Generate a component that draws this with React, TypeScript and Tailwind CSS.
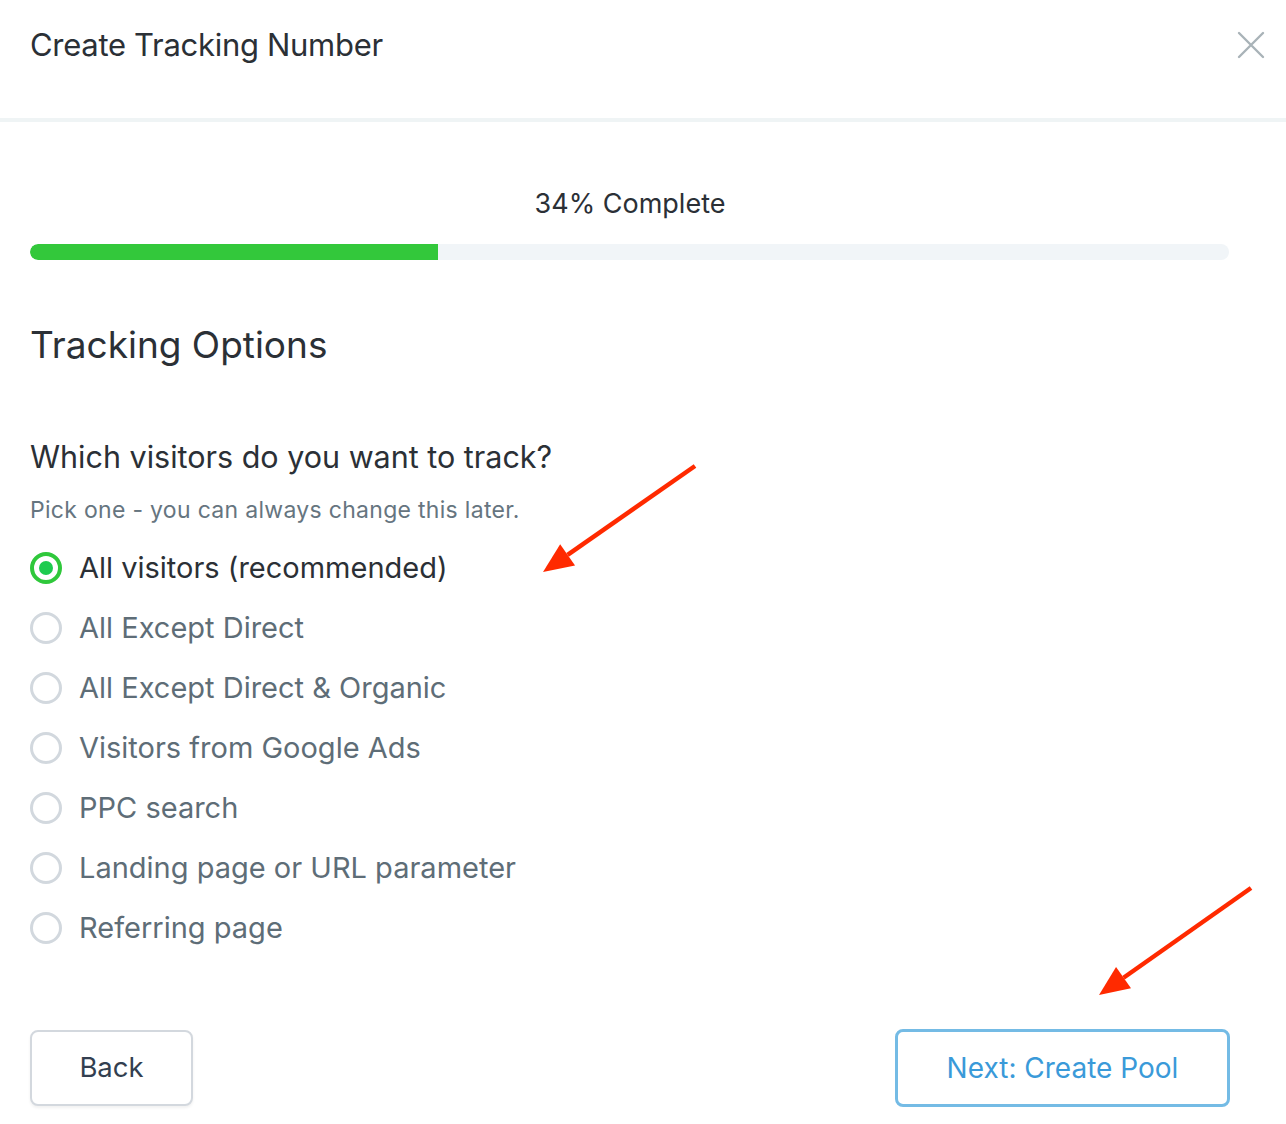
import React from "react";

const options = [
  "All visitors (recommended)",
  "All Except Direct",
  "All Except Direct & Organic",
  "Visitors from Google Ads",
  "PPC search",
  "Landing page or URL parameter",
  "Referring page",
];

function Arrow({ x1, y1, x2, y2 }: { x1: number; y1: number; x2: number; y2: number }) {
  const ang = Math.atan2(y2 - y1, x2 - x1);
  const len = 30;
  const w = 13;
  const bx = x2 - len * Math.cos(ang);
  const by = y2 - len * Math.sin(ang);
  const px = -Math.sin(ang) * w;
  const py = Math.cos(ang) * w;
  return (
    <g>
      <line x1={x1} y1={y1} x2={bx} y2={by} stroke="#ff2a00" strokeWidth={4.5} />
      <polygon points={`${x2},${y2} ${bx + px},${by + py} ${bx - px},${by - py}`} fill="#ff2a00" />
    </g>
  );
}

export default function App() {
  return (
    <div
      className="relative w-[1286px] h-[1124px] bg-white overflow-hidden text-[#2b3036]"
      style={{ fontFamily: "Inter, 'Noto Sans', sans-serif" }}
    >
      <div className="h-[118px] flex items-start justify-between pl-[30px] pr-[20px] pt-[25px]">
        <div className="text-[31px] leading-[40px] tracking-[-0.3px] text-[#2b3036]">Create Tracking Number</div>
        <svg width="30" height="30" viewBox="0 0 30 30" className="mt-[5px]">
          <path d="M3 3 L27 27 M27 3 L3 27" stroke="#a9b3b8" strokeWidth="2.4" strokeLinecap="round" />
        </svg>
      </div>
      <div className="h-[4px] bg-[#eff4f5]" />

      <div className="pl-[30px] pr-[56px]">
        <div className="pt-[64px] text-center text-[27px] leading-[36px] text-[#2b3036]">34% Complete</div>
        <div className="mt-[22px] h-[16px] w-[1199px] rounded-full bg-[#f1f5f8] overflow-hidden">
          <div className="h-full w-[408px] bg-[#33c83b] rounded-l-full" />
        </div>

        <div className="mt-[61px] text-[37px] leading-[48px] text-[#2b3036]">Tracking Options</div>

        <div className="mt-[68px] text-[30.5px] leading-[40px] text-[#2b3036]">Which visitors do you want to track?</div>
        <div className="mt-[18px] text-[23px] leading-[30px] tracking-[0.3px] text-[#66757f]">Pick one - you can always change this later.</div>

        <div className="mt-[13px] flex flex-col">
          {options.map((o, i) => (
            <div key={o} className="h-[60px] flex items-center">
              {i === 0 ? (
                <div className="w-[32px] h-[32px] rounded-full border-[4px] border-[#2fc83b] flex items-center justify-center">
                  <div className="w-[14px] h-[14px] rounded-full bg-[#1dcb4f]" />
                </div>
              ) : (
                <div className="w-[32px] h-[32px] rounded-full border-[3px] border-[#d2d8de]" />
              )}
              <div className={`ml-[17px] text-[29px] leading-[36px] ${i === 0 ? "text-[#2b3036]" : "text-[#5e6d77]"}`}>{o}</div>
            </div>
          ))}
        </div>

        <div className="mt-[71px] flex items-center justify-between w-[1200px]">
          <button className="w-[163px] h-[76px] rounded-[8px] border-[2px] border-[#d3d8de] bg-white text-[27.5px] text-[#333f50] shadow-[0_2px_3px_rgba(0,0,0,0.06)]">
            Back
          </button>
          <button className="w-[335px] h-[78px] rounded-[8px] border-[3px] border-[#74bbe5] bg-white text-[28px] text-[#3a9ad9]">
            Next: Create Pool
          </button>
        </div>
      </div>

      <svg className="absolute left-0 top-0 pointer-events-none" width="1286" height="1124">
        <Arrow x1={695} y1={466} x2={543} y2={572} />
        <Arrow x1={1251} y1={888} x2={1099} y2={995} />
      </svg>
    </div>
  );
}
